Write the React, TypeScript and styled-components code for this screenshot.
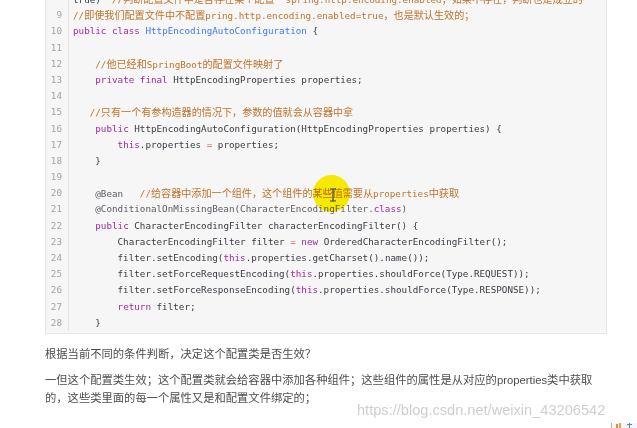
import React from "react";
import styled, { createGlobalStyle } from "styled-components";

const GlobalStyle = createGlobalStyle`
	html,
	body {
		margin: 0;
		padding: 0;
		background: #ffffff;
		overflow: hidden;
	}
`;

const Page = styled("div")`
	position: relative;
	width: 637px;
	height: 428px;
	overflow: hidden;
	padding-left: 45px;
	box-sizing: border-box;
`;

const Article = styled("article")`
	width: 562px;
`;

const CodeBlock = styled("div")`
	display: flex;
	margin-top: -9px;
	padding-bottom: 2px;
	background: #f6f6f6;
	border: 1px solid #e6e6e6;
	border-top: none;
	font-family: "DejaVu Sans Mono", "Liberation Mono", monospace;
	font-size: 9.25px;
`;

const Gutter = styled("ol")`
	list-style: none;
	margin: 0;
	padding: 0 6px 0 0;
	width: 16px;
	border-right: 1px solid #e2e2e2;
	text-align: right;
	color: #a3a3a3;
`;

const LineNo = styled("li")`
	height: 16.2px;
	line-height: 16.2px;
`;

const Code = styled("pre")`
	flex: 1;
	margin: 0;
	padding: 0 0 0 4px;
	font: inherit;
	color: #383a42;
`;

const Line = styled("div")`
	height: 16.2px;
	line-height: 16.2px;
	white-space: pre;
`;

const tokenColors: Record<string, string> = {
	a: "#5c5c66",
	k: "#a626a4",
	m: "#c0732c",
	o: "#e45649",
	t: "#4078f2",
};

const Token = styled("span")<{ $kind: string }>`
	color: ${({ $kind }): string => tokenColors[$kind] || "inherit"};
`;

const Cjk = styled("span")`
	font-family: "Noto Sans CJK SC", sans-serif;
	font-size: 10.1px;
`;

const Paragraph = styled("p")<{ $gap: number }>`
	max-width: 552px;
	margin: 0 0 ${({ $gap }): string => `${$gap}px`};
	font-family: "Liberation Sans", "Noto Sans CJK SC", sans-serif;
	font-size: 11.3px;
	line-height: 17.5px;
	color: #4d4d4d;
`;

const Lead = styled(Paragraph)`
	margin-top: 12px;
`;

const Spot = styled("div")`
	position: absolute;
	left: 313px;
	top: 175px;
	width: 37px;
	height: 37px;
	border-radius: 50%;
	background: #fff200;
	mix-blend-mode: multiply;
	pointer-events: none;
`;

const Caret = styled("svg")`
	position: absolute;
	left: 329px;
	top: 188px;
`;

const Watermark = styled("div")`
	position: absolute;
	left: 357px;
	top: 402px;
	font-family: "Liberation Sans", sans-serif;
	font-size: 14.6px;
	color: rgba(190, 190, 190, 0.75);
	white-space: nowrap;
`;

const Badge = styled("svg")`
	position: absolute;
	right: 0;
	bottom: 0;
`;

// null marks a wrapped continuation of the line above, which gets no number
const source: Array<[number | null, string]> = [
	[null, "true)  [[m://判断配置文件中是否存在某个配置  spring.http.encoding.enabled；如果不存在，判断也是成立的]]"],
	[9, "[[m://即使我们配置文件中不配置pring.http.encoding.enabled=true，也是默认生效的；]]"],
	[10, "[[k:public]] [[k:class]] [[t:HttpEncodingAutoConfiguration]] {"],
	[11, ""],
	[12, "    [[m://他已经和SpringBoot的配置文件映射了]]"],
	[13, "    [[k:private]] [[k:final]] HttpEncodingProperties properties;"],
	[14, ""],
	[15, "   [[m://只有一个有参构造器的情况下，参数的值就会从容器中拿]]"],
	[16, "    [[k:public]] HttpEncodingAutoConfiguration(HttpEncodingProperties properties) {"],
	[17, "        [[k:this]].properties [[o:=]] properties;"],
	[18, "    }"],
	[19, ""],
	[20, "    [[a:@Bean]]   [[m://给容器中添加一个组件，这个组件的某些值需要从properties中获取]]"],
	[21, "    [[a:@ConditionalOnMissingBean(CharacterEncodingFilter.]][[k:class]][[a:)]]"],
	[22, "    [[k:public]] CharacterEncodingFilter characterEncodingFilter() {"],
	[23, "        CharacterEncodingFilter filter [[o:=]] [[k:new]] OrderedCharacterEncodingFilter();"],
	[24, "        filter.setEncoding([[k:this]].properties.getCharset().name());"],
	[25, "        filter.setForceRequestEncoding([[k:this]].properties.shouldForce(Type.REQUEST));"],
	[26, "        filter.setForceResponseEncoding([[k:this]].properties.shouldForce(Type.RESPONSE));"],
	[27, "        [[k:return]] filter;"],
	[28, "    }"],
];

const cjkRun = /[\u3000-\u9fff\uff00-\uffef]/;

const splitCjk = (text: string): React.ReactNode[] =>
	text
		.split(/([\u3000-\u9fff\uff00-\uffef]+)/)
		.filter(part => part !== "")
		.map((part, i) =>
			cjkRun.test(part) ? (
				<Cjk key={i}>{part}</Cjk>
			) : (
				<React.Fragment key={i}>{part}</React.Fragment>
			)
		);

const renderLine = (line: string): React.ReactNode[] =>
	line
		.split(/(\[\[\w:.*?\]\])/)
		.filter(part => part !== "")
		.map((part, i) => {
			const match = part.match(/^\[\[(\w):(.*)\]\]$/);
			if (!match) {
				return <React.Fragment key={i}>{splitCjk(part)}</React.Fragment>;
			}
			return (
				<Token key={i} $kind={match[1]}>
					{splitCjk(match[2])}
				</Token>
			);
		});

const App = (): React.ReactElement => (
	<Page>
		<GlobalStyle />
		<Article>
			<CodeBlock>
				<Gutter>
					{source.map(([num], i) => (
						<LineNo key={i}>{num ?? ""}</LineNo>
					))}
				</Gutter>
				<Code>
					{source.map(([, line], i) => (
						<Line key={i}>{line === "" ? " " : renderLine(line)}</Line>
					))}
				</Code>
			</CodeBlock>

			<Lead $gap={9}>根据当前不同的条件判断，决定这个配置类是否生效？</Lead>
			<Paragraph $gap={0}>
				一但这个配置类生效；这个配置类就会给容器中添加各种组件；这些组件的属性是从对应的properties类中获取的，这些类里面的每一个属性又是和配置文件绑定的；
			</Paragraph>
		</Article>

		<Spot />
		<Caret width="8" height="14" viewBox="0 0 8 14">
			<path
				d="M1 1h6M4 1v12M1 13h6"
				fill="none"
				stroke="#2b3a8c"
				strokeWidth="1.2"
			/>
		</Caret>

		<Watermark>https://blog.csdn.net/weixin_43206542</Watermark>

		<Badge width="26" height="5" viewBox="0 0 26 5">
			<rect x="0" y="0" width="26" height="5" fill="#f3f6fb" />
			<rect x="0" y="0" width="1" height="5" fill="#9bb3d6" />
			<rect x="5" y="1" width="2" height="4" fill="#e98a2c" />
			<rect x="8" y="0" width="2" height="5" fill="#f0a040" />
			<rect x="16" y="1" width="5" height="1" fill="#5a84c8" />
			<rect x="18" y="0" width="1" height="5" fill="#5a84c8" />
		</Badge>
	</Page>
);

export default App;
